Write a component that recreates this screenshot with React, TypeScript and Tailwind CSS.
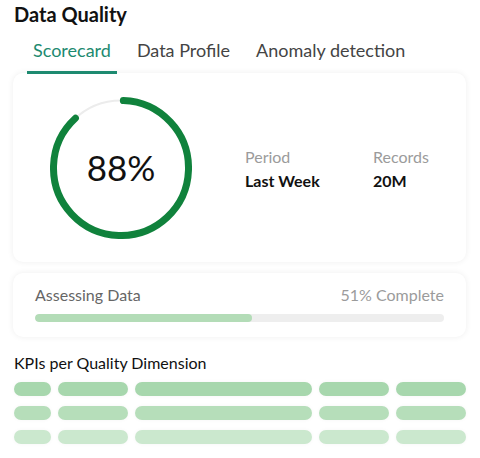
import React from "react";

const font = { fontFamily: "Lato, 'Noto Sans', sans-serif" };

function Ring() {
  const r = 67.5;
  const c = 2 * Math.PI * r;
  const pct = 0.875;
  return (
    <svg width="142" height="142" viewBox="0 0 142 142" className="shrink-0">
      <circle cx="71" cy="71" r={r} fill="none" stroke="#ececec" strokeWidth="2" />
      <circle
        cx="71"
        cy="71"
        r={r}
        fill="none"
        stroke="#10823c"
        strokeWidth="7"
        strokeLinecap="round"
        strokeDasharray={`${c * pct} ${c}`}
        transform="rotate(-88 71 71)"
      />
    </svg>
  );
}

const rowColors = ["bg-[#a7d7ad]", "bg-[#b6deba]", "bg-[#cbe8ce]"];

export default function App() {
  return (
    <div className="w-[480px] h-[458px] bg-white overflow-hidden" style={font}>
      <div className="pl-[14px] pt-[1px] text-[20px] font-bold text-[#111] leading-[26px]">Data Quality</div>
      <div className="flex pl-[27px] mt-[11px] gap-[14px] text-[18px] leading-[24px]">
        <div className="px-[6px] pb-[9px] text-[#1d8a70] border-b-[3px] border-[#1d8a70]">Scorecard</div>
        <div className="px-[6px] pb-[9px] text-[#444]">Data Profile</div>
        <div className="px-[6px] pb-[9px] text-[#444]">Anomaly detection</div>
      </div>
      <div className="mx-[13px] w-[453px] -mt-[1px] h-[189px] rounded-[10px] bg-white shadow-[0_0_6px_rgba(0,0,0,0.07)] flex items-center pl-[37px]">
        <div className="relative w-[142px] h-[142px]">
          <Ring />
          <div className="absolute inset-0 flex items-center justify-center text-[35px] text-[#111] leading-none">88%</div>
        </div>
        <div className="flex ml-[53px] text-[16px] leading-[24px] mt-[3px]">
          <div className="w-[128px]">
            <div className="text-[#9b9b9b]">Period</div>
            <div className="font-bold text-[#111]">Last Week</div>
          </div>
          <div>
            <div className="text-[#9b9b9b]">Records</div>
            <div className="font-bold text-[#111]">20M</div>
          </div>
        </div>
      </div>
      <div className="mx-[13px] w-[453px] mt-[11px] h-[64px] rounded-[10px] bg-white shadow-[0_0_6px_rgba(0,0,0,0.07)] px-[22px] pt-[10px]">
        <div className="flex justify-between text-[16px] leading-[24px]">
          <span className="text-[#666]">Assessing Data</span>
          <span className="text-[#9b9b9b]">51% Complete</span>
        </div>
        <div className="mt-[7px] h-[8px] rounded-full bg-[#eeeeee] overflow-hidden">
          <div className="h-full rounded-full bg-[#b3dcb7]" style={{ width: "53%" }} />
        </div>
      </div>
      <div className="pl-[14px] mt-[14px] text-[16px] leading-[24px] text-[#111]">KPIs per Quality Dimension</div>
      <div className="mx-[14px] mt-[7px] flex flex-col gap-[10px]">
        {rowColors.map((c, i) => (
          <div key={i} className="grid grid-cols-[37px_70px_177px_70px_70px] gap-[7px]">
            {[0, 1, 2, 3, 4].map((j) => (
              <div key={j} className={`h-[14px] rounded-full ${c} shadow-[0_0_4px_rgba(0,0,0,0.04)]`} />
            ))}
          </div>
        ))}
      </div>
    </div>
  );
}
